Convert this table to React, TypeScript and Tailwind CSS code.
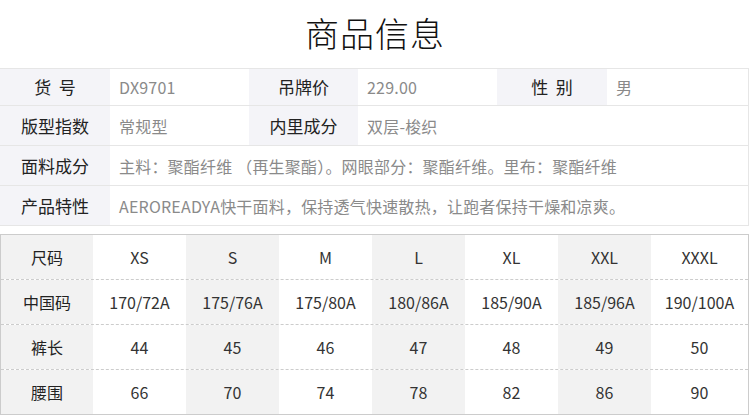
const font = "font-['Noto_Sans_CJK_SC','Noto_Sans',sans-serif]";

type InfoCell = { label: string; value: string };

const infoRows: InfoCell[][] = [
  [
    { label: "货  号", value: "DX9701" },
    { label: "吊牌价", value: "229.00" },
    { label: "性  别", value: "男" },
  ],
  [
    { label: "版型指数", value: "常规型" },
    { label: "内里成分", value: "双层-梭织" },
    { label: "", value: "" },
  ],
];

const wideRows: InfoCell[] = [
  { label: "面料成分", value: "主料：聚酯纤维 （再生聚酯）。网眼部分：聚酯纤维。里布：聚酯纤维" },
  { label: "产品特性", value: "AEROREADYA快干面料，保持透气快速散热，让跑者保持干燥和凉爽。" },
];

const sizeRows: string[][] = [
  ["尺码", "XS", "S", "M", "L", "XL", "XXL", "XXXL"],
  ["中国码", "170/72A", "175/76A", "175/80A", "180/86A", "185/90A", "185/96A", "190/100A"],
  ["裤长", "44", "45", "46", "47", "48", "49", "50"],
  ["腰围", "66", "70", "74", "78", "82", "86", "90"],
];

function Label({ text, empty }: { text: string; empty?: boolean }) {
  return (
    <div className={`flex items-center justify-center whitespace-pre text-[17px] text-[#222] ${empty ? "bg-white" : "bg-[#f4f4f8]"}`}>
      {text}
    </div>
  );
}

function Value({ text }: { text: string }) {
  return (
    <div className="flex items-center pl-[9px] text-[16px] text-[#8a8a8a] whitespace-nowrap tracking-[0.2px]">{text}</div>
  );
}

export default function App() {
  return (
    <div className={`w-[750px] h-[417px] bg-white ${font}`}>
      <div className="h-[68px] flex items-center justify-center pb-[4px]">
        <h1 className="text-[34px] font-light text-[#111] tracking-[1px]">商品信息</h1>
      </div>

      <div className="w-[749px] border-t border-r border-[#e6e6e6]">
        {infoRows.map((row, i) => (
          <div
            key={i}
            className={`grid grid-cols-[110px_139px_109px_139px_110px_1fr] border-b border-[#e6e6e6] ${i === 0 ? "h-[37px]" : "h-[40px]"}`}
          >
            {row.map((c, j) => (
              <div key={j} className="contents">
                <Label text={c.label} empty={c.label === ""} />
                <Value text={c.value} />
              </div>
            ))}
          </div>
        ))}
        {wideRows.map((c, i) => (
          <div key={i} className="grid grid-cols-[110px_1fr] h-[40px] border-b border-[#e6e6e6]">
            <Label text={c.label} />
            <Value text={c.value} />
          </div>
        ))}
      </div>

      <div className="mt-[8px] w-[749px] border border-[#cccccc]">
        {sizeRows.map((row, i) => (
          <div
            key={i}
            className={`grid grid-cols-[92px_93px_93px_93px_93px_93px_93px_1fr] ${i < sizeRows.length - 1 ? "h-[45px] border-b border-dashed border-[#cccccc]" : "h-[44px]"}`}
          >
            {row.map((cell, j) => (
              <div
                key={j}
                className={`flex items-center justify-center text-[16px] ${j === 0 ? "text-[#222]" : "text-[#333]"} ${j % 2 === 0 && j < 7 ? "bg-[#f2f2f2]" : "bg-white"}`}
              >
                {cell}
              </div>
            ))}
          </div>
        ))}
      </div>
    </div>
  );
}
